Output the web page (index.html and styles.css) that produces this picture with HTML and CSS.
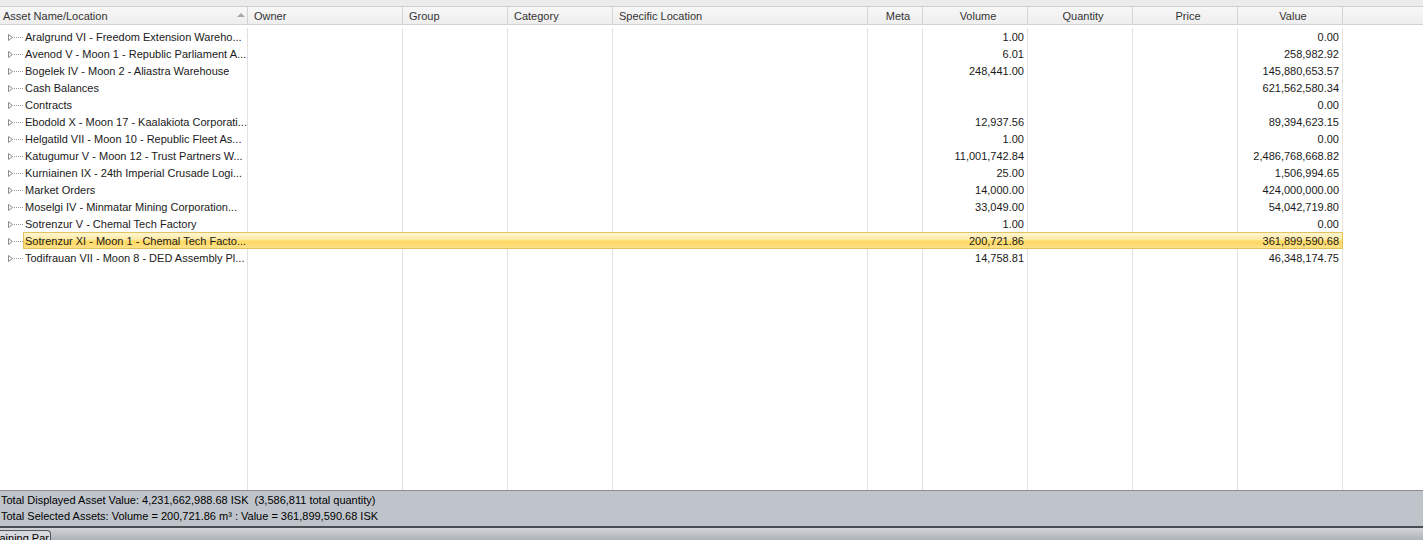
FILE: index.html
```html
<!DOCTYPE html>
<html>
<head>
<meta charset="utf-8">
<link rel="stylesheet" href="styles.css">
</head>
<body>
<div class="app">
  <div class="topstrip"></div>
  <div class="grid header">
    <div class="hc left first">Asset Name/Location<span class="sort"></span></div>
    <div class="hc left">Owner</div>
    <div class="hc left">Group</div>
    <div class="hc left">Category</div>
    <div class="hc left">Specific Location</div>
    <div class="hc center">Meta</div>
    <div class="hc center">Volume</div>
    <div class="hc center">Quantity</div>
    <div class="hc center">Price</div>
    <div class="hc center">Value</div>
    <div class="hc filler"></div>
  </div>
  <div class="body">
    <div class="grid row"><div class="c name"><svg class="tw" width="16" height="17" viewBox="0 0 16 17"><path d="M0.5 3.5 L4.5 6.5 L0.5 9.5 Z" fill="#fff" stroke="#8c8c8c"/><path d="M6 6.5 H16" stroke="#9a9a9a" stroke-dasharray="1 1"/></svg><span class="t">Aralgrund VI - Freedom Extension Wareho...</span></div><div class="c"></div><div class="c"></div><div class="c"></div><div class="c"></div><div class="c"></div><div class="c num">1.00</div><div class="c"></div><div class="c"></div><div class="c num">0.00</div><div class="c filler"></div></div>
    <div class="grid row"><div class="c name"><svg class="tw" width="16" height="17" viewBox="0 0 16 17"><path d="M0.5 3.5 L4.5 6.5 L0.5 9.5 Z" fill="#fff" stroke="#8c8c8c"/><path d="M6 6.5 H16" stroke="#9a9a9a" stroke-dasharray="1 1"/></svg><span class="t">Avenod V - Moon 1 - Republic Parliament A...</span></div><div class="c"></div><div class="c"></div><div class="c"></div><div class="c"></div><div class="c"></div><div class="c num">6.01</div><div class="c"></div><div class="c"></div><div class="c num">258,982.92</div><div class="c filler"></div></div>
    <div class="grid row"><div class="c name"><svg class="tw" width="16" height="17" viewBox="0 0 16 17"><path d="M0.5 3.5 L4.5 6.5 L0.5 9.5 Z" fill="#fff" stroke="#8c8c8c"/><path d="M6 6.5 H16" stroke="#9a9a9a" stroke-dasharray="1 1"/></svg><span class="t">Bogelek IV - Moon 2 - Aliastra Warehouse</span></div><div class="c"></div><div class="c"></div><div class="c"></div><div class="c"></div><div class="c"></div><div class="c num">248,441.00</div><div class="c"></div><div class="c"></div><div class="c num">145,880,653.57</div><div class="c filler"></div></div>
    <div class="grid row"><div class="c name"><svg class="tw" width="16" height="17" viewBox="0 0 16 17"><path d="M0.5 3.5 L4.5 6.5 L0.5 9.5 Z" fill="#fff" stroke="#8c8c8c"/><path d="M6 6.5 H16" stroke="#9a9a9a" stroke-dasharray="1 1"/></svg><span class="t">Cash Balances</span></div><div class="c"></div><div class="c"></div><div class="c"></div><div class="c"></div><div class="c"></div><div class="c num"></div><div class="c"></div><div class="c"></div><div class="c num">621,562,580.34</div><div class="c filler"></div></div>
    <div class="grid row"><div class="c name"><svg class="tw" width="16" height="17" viewBox="0 0 16 17"><path d="M0.5 3.5 L4.5 6.5 L0.5 9.5 Z" fill="#fff" stroke="#8c8c8c"/><path d="M6 6.5 H16" stroke="#9a9a9a" stroke-dasharray="1 1"/></svg><span class="t">Contracts</span></div><div class="c"></div><div class="c"></div><div class="c"></div><div class="c"></div><div class="c"></div><div class="c num"></div><div class="c"></div><div class="c"></div><div class="c num">0.00</div><div class="c filler"></div></div>
    <div class="grid row"><div class="c name"><svg class="tw" width="16" height="17" viewBox="0 0 16 17"><path d="M0.5 3.5 L4.5 6.5 L0.5 9.5 Z" fill="#fff" stroke="#8c8c8c"/><path d="M6 6.5 H16" stroke="#9a9a9a" stroke-dasharray="1 1"/></svg><span class="t">Ebodold X - Moon 17 - Kaalakiota Corporati...</span></div><div class="c"></div><div class="c"></div><div class="c"></div><div class="c"></div><div class="c"></div><div class="c num">12,937.56</div><div class="c"></div><div class="c"></div><div class="c num">89,394,623.15</div><div class="c filler"></div></div>
    <div class="grid row"><div class="c name"><svg class="tw" width="16" height="17" viewBox="0 0 16 17"><path d="M0.5 3.5 L4.5 6.5 L0.5 9.5 Z" fill="#fff" stroke="#8c8c8c"/><path d="M6 6.5 H16" stroke="#9a9a9a" stroke-dasharray="1 1"/></svg><span class="t">Helgatild VII - Moon 10 - Republic Fleet As...</span></div><div class="c"></div><div class="c"></div><div class="c"></div><div class="c"></div><div class="c"></div><div class="c num">1.00</div><div class="c"></div><div class="c"></div><div class="c num">0.00</div><div class="c filler"></div></div>
    <div class="grid row"><div class="c name"><svg class="tw" width="16" height="17" viewBox="0 0 16 17"><path d="M0.5 3.5 L4.5 6.5 L0.5 9.5 Z" fill="#fff" stroke="#8c8c8c"/><path d="M6 6.5 H16" stroke="#9a9a9a" stroke-dasharray="1 1"/></svg><span class="t">Katugumur V - Moon 12 - Trust Partners W...</span></div><div class="c"></div><div class="c"></div><div class="c"></div><div class="c"></div><div class="c"></div><div class="c num">11,001,742.84</div><div class="c"></div><div class="c"></div><div class="c num">2,486,768,668.82</div><div class="c filler"></div></div>
    <div class="grid row"><div class="c name"><svg class="tw" width="16" height="17" viewBox="0 0 16 17"><path d="M0.5 3.5 L4.5 6.5 L0.5 9.5 Z" fill="#fff" stroke="#8c8c8c"/><path d="M6 6.5 H16" stroke="#9a9a9a" stroke-dasharray="1 1"/></svg><span class="t">Kurniainen IX - 24th Imperial Crusade Logi...</span></div><div class="c"></div><div class="c"></div><div class="c"></div><div class="c"></div><div class="c"></div><div class="c num">25.00</div><div class="c"></div><div class="c"></div><div class="c num">1,506,994.65</div><div class="c filler"></div></div>
    <div class="grid row"><div class="c name"><svg class="tw" width="16" height="17" viewBox="0 0 16 17"><path d="M0.5 3.5 L4.5 6.5 L0.5 9.5 Z" fill="#fff" stroke="#8c8c8c"/><path d="M6 6.5 H16" stroke="#9a9a9a" stroke-dasharray="1 1"/></svg><span class="t">Market Orders</span></div><div class="c"></div><div class="c"></div><div class="c"></div><div class="c"></div><div class="c"></div><div class="c num">14,000.00</div><div class="c"></div><div class="c"></div><div class="c num">424,000,000.00</div><div class="c filler"></div></div>
    <div class="grid row"><div class="c name"><svg class="tw" width="16" height="17" viewBox="0 0 16 17"><path d="M0.5 3.5 L4.5 6.5 L0.5 9.5 Z" fill="#fff" stroke="#8c8c8c"/><path d="M6 6.5 H16" stroke="#9a9a9a" stroke-dasharray="1 1"/></svg><span class="t">Moselgi IV - Minmatar Mining Corporation...</span></div><div class="c"></div><div class="c"></div><div class="c"></div><div class="c"></div><div class="c"></div><div class="c num">33,049.00</div><div class="c"></div><div class="c"></div><div class="c num">54,042,719.80</div><div class="c filler"></div></div>
    <div class="grid row"><div class="c name"><svg class="tw" width="16" height="17" viewBox="0 0 16 17"><path d="M0.5 3.5 L4.5 6.5 L0.5 9.5 Z" fill="#fff" stroke="#8c8c8c"/><path d="M6 6.5 H16" stroke="#9a9a9a" stroke-dasharray="1 1"/></svg><span class="t">Sotrenzur V - Chemal Tech Factory</span></div><div class="c"></div><div class="c"></div><div class="c"></div><div class="c"></div><div class="c"></div><div class="c num">1.00</div><div class="c"></div><div class="c"></div><div class="c num">0.00</div><div class="c filler"></div></div>
    <div class="grid row selected"><div class="c name"><svg class="tw" width="16" height="17" viewBox="0 0 16 17"><path d="M0.5 3.5 L4.5 6.5 L0.5 9.5 Z" fill="#fff" stroke="#8c8c8c"/><path d="M6 6.5 H16" stroke="#9a9a9a" stroke-dasharray="1 1"/></svg><span class="t">Sotrenzur XI - Moon 1 - Chemal Tech Facto...</span></div><div class="c"></div><div class="c"></div><div class="c"></div><div class="c"></div><div class="c"></div><div class="c num">200,721.86</div><div class="c"></div><div class="c"></div><div class="c num">361,899,590.68</div><div class="c filler"></div></div>
    <div class="grid row"><div class="c name"><svg class="tw" width="16" height="17" viewBox="0 0 16 17"><path d="M0.5 3.5 L4.5 6.5 L0.5 9.5 Z" fill="#fff" stroke="#8c8c8c"/><path d="M6 6.5 H16" stroke="#9a9a9a" stroke-dasharray="1 1"/></svg><span class="t">Todifrauan VII - Moon 8 - DED Assembly Pl...</span></div><div class="c"></div><div class="c"></div><div class="c"></div><div class="c"></div><div class="c"></div><div class="c num">14,758.81</div><div class="c"></div><div class="c"></div><div class="c num">46,348,174.75</div><div class="c filler"></div></div>
    <div class="grid rest"><div class="c"></div><div class="c"></div><div class="c"></div><div class="c"></div><div class="c"></div><div class="c"></div><div class="c"></div><div class="c"></div><div class="c"></div><div class="c"></div><div class="c filler"></div></div>
  </div>
  <div class="footer">
    <div class="fl">Total Displayed Asset Value: 4,231,662,988.68 ISK&nbsp; (3,586,811 total quantity)</div>
    <div class="fl">Total Selected Assets: Volume = 200,721.86 m³ : Value = 361,899,590.68 ISK</div>
  </div>
  <div class="tabbar">
    <div class="tab"><span class="tabtext">aining Par</span></div>
  </div>
</div>
</body>
</html>
```
FILE: styles.css
```css
html, body {
  margin: 0;
  padding: 0;
  background: #fff;
}
body {
  font-family: "Liberation Sans", Arial, sans-serif;
  font-size: 11px;
  color: #1a1a1a;
}
.app {
  width: 1423px;
  height: 540px;
  display: flex;
  flex-direction: column;
  overflow: hidden;
}
.topstrip {
  height: 6px;
  background: #ececec;
  border-bottom: 1px solid #cfcfcf;
  flex: none;
}
.grid {
  display: grid;
  grid-template-columns: 248px 155px 105px 105px 255px 55px 105px 105px 105px 105px 1fr;
}
.header {
  height: 17px;
  background: linear-gradient(#f7f7f7, #eeeeee);
  border-bottom: 1px solid #d3d3d3;
  flex: none;
}
.hc {
  border-right: 1px solid #d3d3d3;
  line-height: 17px;
  padding-top: 1px;
  height: 16px;
  color: #333;
  white-space: nowrap;
  overflow: hidden;
  position: relative;
}
.hc.left { padding-left: 6px; }
.hc.first { padding-left: 3px; }
.hc.center { text-align: center; padding-left: 6px; }
.hc.filler { border-right: none; }
.sort {
  position: absolute;
  right: 2px;
  top: 6px;
  width: 0;
  height: 0;
  border-left: 4px solid transparent;
  border-right: 4px solid transparent;
  border-bottom: 4px solid #a8a8a8;
}
.body {
  flex: 1;
  display: flex;
  flex-direction: column;
  padding-top: 3px;
  background: #fff;
  position: relative;
}
.row {
  height: 17px;
  flex: none;
  position: relative;
}
.rest { flex: 1; }
.c {
  border-right: 1px solid #e2e2e2;
  line-height: 17px;
  padding-top: 1px;
  height: 16px;
  white-space: nowrap;
  overflow: hidden;
  position: relative;
  z-index: 1;
}
.rest .c { height: auto; }
.c.filler { border-right: none; }
.c.num {
  text-align: right;
  padding-right: 3px;
}
.c.name {
  display: flex;
  align-items: flex-start;
}
.tw {
  flex: none;
  margin-left: 8px;
  margin-top: 2px;
}
.t {
  padding-left: 1px;
  overflow: hidden;
  white-space: nowrap;
}
.row.selected::before {
  content: "";
  position: absolute;
  left: 23px;
  top: 0;
  width: 1318px;
  height: 15px;
  border: 1px solid #e3c35e;
  background: linear-gradient(#fff6d2 0%, #ffe9a0 45%, #ffd95e 55%, #ffe08a 100%);
  z-index: 0;
}
.row.selected .c { border-right-color: transparent; }
.footer {
  flex: none;
  height: 34px;
  background: #bfc4cb;
  border-top: 1px solid #8a8d92;
  border-bottom: 2px solid #4a4d52;
  padding: 1px 0 0 1px;
  color: #000;
}
.fl {
  line-height: 16px;
  height: 16px;
  white-space: nowrap;
}
.tabbar {
  flex: none;
  height: 12px;
  background: linear-gradient(#d2d5da, #aeb2b9);
  display: flex;
  align-items: flex-end;
}
.tab {
  height: 9px;
  width: 49px;
  border: 1px solid #55585d;
  border-left: none;
  border-bottom: none;
  border-radius: 0 4px 0 0;
  background: #d6d9de;
  overflow: hidden;
  display: flex;
  justify-content: flex-end;
  padding-right: 1px;
}
.tabtext {
  flex: none;
  line-height: 13px;
  margin-top: 1px;
  font-size: 11px;
  color: #000;
  white-space: nowrap;
}
```
